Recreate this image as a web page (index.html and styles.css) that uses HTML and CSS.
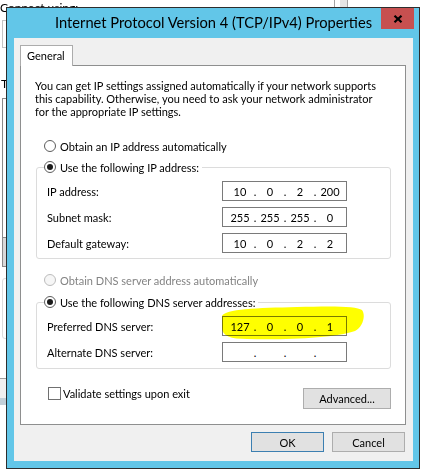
FILE: index.html
```html
<!DOCTYPE html>
<html lang="en">
<head>
    <meta charset="UTF-8">
    <title>Internet Protocol Version 4 (TCP/IPv4) Properties</title>
    <link rel="stylesheet" href="styles.css">
</head>
<body>
    <!-- bits of the adapter properties window behind the dialog -->
    <div class="backdrop">
        <div class="bd-text bd-connect">Connect using:</div>
        <div class="bd-box bd-adapter"></div>
        <div class="bd-text bd-items">This</div>
        <div class="bd-box bd-list"></div>
        <div class="bd-button"></div>
        <div class="bd-group"></div>
        <div class="bd-footer"></div>
        <div class="bd-scroll"></div>
    </div>

    <div class="dialog">
        <div class="titlebar">
            <span class="title">Internet Protocol Version 4 (TCP/IPv4) Properties</span>
            <span class="close">
                <svg width="10" height="8" viewBox="0 0 10 8"><path d="M1.5 0.8 L8.5 7.2 M8.5 0.8 L1.5 7.2" stroke="#000" stroke-width="2.2"/></svg>
            </span>
        </div>

        <div class="client">
            <div class="tabs">
                <div class="tab active">General</div>
            </div>

            <div class="panel">
                <p class="intro">You can get IP settings assigned automatically if your network supports<br>this capability. Otherwise, you need to ask your network administrator<br>for the appropriate IP settings.</p>

                <label class="option first"><span class="radio"></span>Obtain an IP address automatically</label>

                <fieldset class="group ip-group">
                    <legend class="option"><span class="radio checked"></span>Use the following IP address:</legend>
                    <div class="fields">
                        <span>IP address:</span>
                        <div class="ip"><span>10</span><i>.</i><span>0</span><i>.</i><span>2</span><i>.</i><span>200</span></div>
                        <span>Subnet mask:</span>
                        <div class="ip"><span>255</span><i>.</i><span>255</span><i>.</i><span>255</span><i>.</i><span>0</span></div>
                        <span>Default gateway:</span>
                        <div class="ip"><span>10</span><i>.</i><span>0</span><i>.</i><span>2</span><i>.</i><span>2</span></div>
                    </div>
                </fieldset>

                <label class="option disabled"><span class="radio"></span>Obtain DNS server address automatically</label>

                <fieldset class="group dns-group">
                    <legend class="option"><span class="radio checked"></span>Use the following DNS server addresses:</legend>
                    <div class="fields">
                        <span>Preferred DNS server:</span>
                        <div class="ip marked">
                            <span>127</span><i>.</i><span>0</span><i>.</i><span>0</span><i>.</i><span>1</span>
                            <svg class="highlight" width="150" height="42" viewBox="0 0 150 42"><path d="M5 13 C8 6 40 5 80 4 C115 3 140 3 145 7 C149 12 146 24 138 28 C118 35 70 37 30 36 C14 36 5 33 5 25 Z" fill="#ffff00"/></svg>
                        </div>
                        <span>Alternate DNS server:</span>
                        <div class="ip"><span></span><i>.</i><span></span><i>.</i><span></span><i>.</i><span></span></div>
                    </div>
                </fieldset>

                <div class="panel-bottom">
                    <label class="check"><span class="checkbox"></span>Validate settings upon exit</label>
                    <button class="btn advanced">Advanced...</button>
                </div>
            </div>

            <div class="buttons">
                <button class="btn default">OK</button>
                <button class="btn">Cancel</button>
            </div>
        </div>
    </div>
</body>
</html>
```
FILE: styles.css
```css
* {
    box-sizing: border-box;
}
body {
    margin: 0;
    width: 428px;
    height: 476px;
    position: relative;
    overflow: hidden;
    background: #fff;
    font-family: Lato, "Liberation Sans", sans-serif;
    font-size: 11px;
    color: #000;
}

/* window behind */
.backdrop > div {
    position: absolute;
}
.bd-text {
    font-size: 12px;
    line-height: 14px;
    white-space: nowrap;
}
.bd-connect {
    left: 0;
    top: 1px;
    width: 80px;
    overflow: hidden;
}
.bd-items {
    left: 1px;
    top: 77px;
}
.bd-box {
    left: 2px;
    width: 60px;
    background: #fff;
}
.bd-adapter {
    top: 20px;
    height: 28px;
    border: 1px solid #c4c4c4;
}
.bd-list {
    top: 98px;
    height: 140px;
    border: 1px solid #8a8a8a;
}
.bd-button {
    left: 2px;
    top: 237px;
    width: 60px;
    height: 30px;
    background: #d9d9d9;
    border: 1px solid #8a8a8a;
}
.bd-group {
    left: 2px;
    top: 278px;
    width: 60px;
    height: 61px;
    border: 1px solid #dcdcdc;
    border-radius: 3px;
}
.bd-footer {
    left: 0;
    top: 378px;
    width: 10px;
    height: 27px;
    background: #f0f0f0;
    border-top: 1px solid #a0a0a0;
    border-bottom: 7px solid #c2d0d9;
}
.bd-scroll {
    left: 334px;
    top: 0;
    width: 14px;
    height: 8px;
    border-left: 1px solid #a3a3a3;
    border-right: 1px solid #a3a3a3;
    background: linear-gradient(to right, #fff 45%, #e4e4e4 45%);
}

/* dialog */
.dialog {
    position: absolute;
    left: 6px;
    top: 7px;
    width: 414px;
    height: 462px;
    border: 1px solid #2d2d2d;
    background: #62c6e8;
    padding: 0 6px 7px 7px;
    display: flex;
    flex-direction: column;
}
.titlebar {
    height: 30px;
    flex-shrink: 0;
    position: relative;
    text-align: center;
}
.title {
    font-size: 14.7px;
    line-height: 28px;
    white-space: nowrap;
}
.close {
    position: absolute;
    top: 0;
    right: -1px;
    width: 33px;
    height: 21px;
    background: #c75050;
    display: flex;
    align-items: center;
    justify-content: center;
}
.close svg {
    display: block;
}

.client {
    flex: 1;
    background: #f0f0f0;
    padding: 7px 7px 0 6px;
}
.tabs {
    display: flex;
    height: 20px;
}
.tab {
    position: relative;
    width: 53px;
    height: 21px;
    padding-left: 6px;
    line-height: 19px;
    background: #fff;
    border: 1px solid #acacac;
    border-bottom: none;
}
.panel {
    height: 360px;
    background: #fff;
    border: 1px solid #8e8f8f;
    padding: 13px 14px 0;
}
.intro {
    margin: 0;
    line-height: 13px;
    white-space: nowrap;
}

.option {
    display: flex;
    align-items: center;
    height: 16px;
    white-space: nowrap;
}
.option.first {
    margin: 20px 0 0 9px;
}
.option.disabled {
    margin: 13px 0 0 9px;
    color: #838383;
}
.radio {
    width: 12px;
    height: 12px;
    margin-right: 4px;
    border: 1px solid #5c5c5c;
    border-radius: 50%;
    background: #fff;
    display: flex;
    align-items: center;
    justify-content: center;
}
.radio.checked::after {
    content: "";
    width: 6px;
    height: 6px;
    border-radius: 50%;
    background: #1a1a1a;
}
.disabled .radio {
    border-color: #bcbcbc;
    background: #f6f6f6;
}

.group {
    margin: 5px 0 0 1px;
    min-width: 0;
    border: 1px solid #dcdcdc;
    border-radius: 3px;
    padding: 6px 0 5px 10px;
}
.dns-group {
    margin-top: 6px;
    padding-bottom: 6px;
}
.group legend {
    margin-left: -3px;
    padding: 0 3px 0 0;
}
.fields {
    display: grid;
    grid-template-columns: 175px 125px;
    row-gap: 6px;
    align-items: center;
}
.ip {
    position: relative;
    height: 20px;
    display: flex;
    align-items: center;
    padding-left: 5px;
    background: #fff;
    border: 1px solid #7a7a7a;
}
.ip span {
    width: 24px;
    text-align: center;
}
.ip i {
    width: 6px;
    font-style: normal;
    text-align: center;
}
.highlight {
    position: absolute;
    left: -6px;
    top: -14px;
    mix-blend-mode: multiply;
}

.panel-bottom {
    display: flex;
    justify-content: space-between;
    align-items: flex-start;
    margin-top: 16px;
}
.check {
    display: flex;
    align-items: center;
    height: 16px;
    margin-left: 13px;
}
.checkbox {
    width: 13px;
    height: 13px;
    margin-right: 2px;
    background: #fff;
    border: 1px solid #707070;
}

.btn {
    height: 21px;
    padding: 0;
    font: inherit;
    color: #000;
    background: #e1e1e1;
    border: 1px solid #adadad;
}
.advanced {
    width: 88px;
    margin-top: 3px;
}
.buttons {
    display: flex;
    justify-content: flex-end;
    gap: 8px;
    margin-top: 7px;
    padding-right: 1px;
}
.buttons .btn {
    width: 73px;
    height: 20px;
}
.btn.default {
    border-color: #3c7fb1;
}
```
